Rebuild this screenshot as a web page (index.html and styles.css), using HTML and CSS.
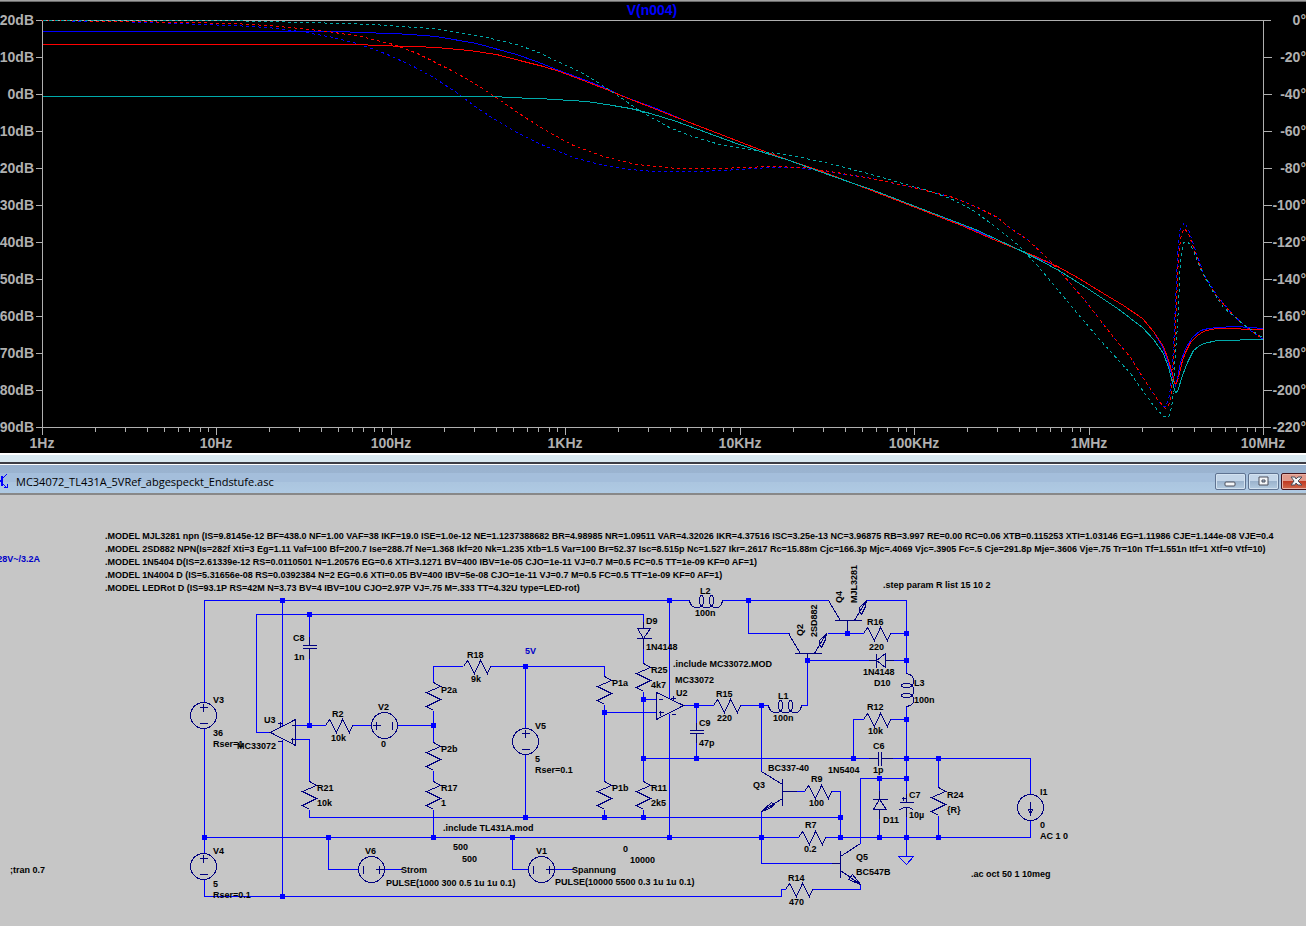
FILE: index.html
```html
<!DOCTYPE html>
<html lang="de">
<head>
  <meta charset="UTF-8">
  <meta name="viewport" content="width=device-width, initial-scale=1">
  <title>MC34072_TL431A_5VRef_abgespeckt_Endstufe.asc</title>
  <link rel="stylesheet" href="styles.css">
</head>
<body>
  <main class="workspace">

    <!-- Bode plot -->
    <section class="plot-pane">
      <svg class="plot" viewBox="0 2 1306 451" role="img" aria-label="V(n004)">
        <defs>
          <path id="decade" d="M53 0v4M83 0v4M105 0v4M122 0v4M136 0v4M147 0v4M158 0v4M166 0v4"/>
        </defs>

        <g class="axis" transform="translate(.5 .5)">
          <path d="M42 20H1270M42 20V434M1263 20V434M35 427H1270"/>
          <path d="M35 20h7M35 57h7M35 94h7M35 131h7M35 168h7M35 205h7M35 242h7M35 279h7M35 316h7M35 353h7M35 390h7"/>
          <path d="M1263 57h8M1263 94h8M1263 131h8M1263 168h8M1263 205h8M1263 242h8M1263 279h8M1263 316h8M1263 353h8M1263 390h8"/>
          <path d="M216 427v7M391 427v7M565 427v7M740 427v7M914 427v7M1089 427v7"/>
          <use href="#decade" x="42" y="427"/>
          <use href="#decade" x="216" y="427"/>
          <use href="#decade" x="391" y="427"/>
          <use href="#decade" x="565" y="427"/>
          <use href="#decade" x="740" y="427"/>
          <use href="#decade" x="914" y="427"/>
          <use href="#decade" x="1089" y="427"/>
        </g>

        <!-- R = 15 -->
        <g class="trace trace-blue" transform="translate(.5 .5)">
          <polyline points="42,31 340,31 359,32 392,33 410,34 436,36 476,43 516,54 536,61 556,69 586,80 606,88 623,96 656,108 689,122 723,135 759,149 789,160 819,170 853,183 871,189 920,208 973,229 993,239 1020,250 1033,256 1057,266 1077,277 1103,293 1123,305 1142,318 1153,331 1162,346 1167,360 1171,373 1175,385 1177,378 1180,362 1185,348 1192,337 1200,330 1208,328 1217,327 1235,326 1263,328"/>
          <polyline class="phase" points="42,20 100,21 157,22 200,24 233,25 267,27 300,31 333,37 360,44 387,54 413,66 433,77 456,92 476,107 496,120 516,132 543,145 573,157 603,165 629,169 653,171 696,171 723,170 769,167 796,167 819,170 853,175 871,178 913,187 953,197 977,207 997,217 1010,228 1027,239 1047,258 1063,275 1087,303 1110,333 1130,357 1143,378 1157,399 1164,407 1168,400 1170,388 1173,348 1175,302 1177,255 1179,230 1184,222 1188,229 1194,247 1203,273 1217,296 1233,315 1250,330 1263,339"/>
        </g>
        <!-- R = 10 -->
        <g class="trace trace-red" transform="translate(.5 .5)">
          <polyline points="42,44 365,44 370,45 414,46 436,47 469,50 496,54 519,60 543,66 559,71 583,80 606,89 623,96 656,109 689,122 723,135 759,149 789,160 819,170 853,183 871,190 920,209 961,225 993,239 1020,250 1033,255 1057,266 1077,277 1103,293 1123,305 1142,318 1153,331 1163,346 1168,360 1172,373 1174,383 1176,383 1178,377 1182,360 1185,352 1190,342 1197,335 1203,331 1210,329 1217,328 1263,329"/>
          <polyline class="phase" points="42,20 130,21 183,22 233,23 267,25 300,28 327,31 360,36 393,44 417,53 433,61 453,71 476,84 503,102 523,116 549,132 573,145 603,156 636,164 676,168 719,168 769,166 803,167 836,172 871,178 913,187 953,197 977,207 997,217 1010,228 1027,239 1047,258 1063,275 1087,303 1110,333 1130,357 1143,378 1157,399 1165,408 1169,403 1171,390 1174,348 1176,302 1178,255 1181,233 1184,228 1188,233 1193,247 1203,275 1217,297 1233,315 1250,330 1263,339"/>
        </g>
        <!-- R = 2 -->
        <g class="trace trace-teal" transform="translate(.5 .5)">
          <polyline points="42,96 500,96 503,97 539,98 570,100 586,101 606,104 630,108 650,113 676,121 706,132 736,143 760,151 789,160 819,171 853,183 871,189 920,208 975,229 990,236 1020,250 1040,260 1060,271 1087,288 1117,308 1142,327 1153,339 1163,353 1168,367 1172,382 1175,392 1177,391 1182,375 1187,362 1193,350 1198,346 1203,343 1217,340 1263,339"/>
          <polyline class="phase" points="42,20 221,20 306,22 342,23 373,24 400,26 433,28 453,31 486,37 516,44 536,51 559,62 579,71 599,83 623,99 636,108 649,116 669,127 689,135 719,144 753,150 769,152 796,156 829,163 871,174 927,190 950,198 973,210 997,228 1017,244 1037,265 1057,289 1077,313 1100,340 1130,373 1153,405 1163,416 1168,417 1171,407 1173,392 1174,365 1177,325 1179,282 1180,258 1183,242 1187,241 1192,248 1200,268 1213,292 1223,307 1243,324 1263,338"/>
        </g>

        <text class="plot-title" x="652" y="15">V(n004)</text>
        <g class="scale scale-end">
          <text x="34" y="25">20dB</text>
          <text x="34" y="62">10dB</text>
          <text x="34" y="99">0dB</text>
          <text x="34" y="136">10dB</text>
          <text x="34" y="173">20dB</text>
          <text x="34" y="210">30dB</text>
          <text x="34" y="247">40dB</text>
          <text x="34" y="284">50dB</text>
          <text x="34" y="321">60dB</text>
          <text x="34" y="358">70dB</text>
          <text x="34" y="395">80dB</text>
          <text x="34" y="432">90dB</text>
          <text x="1306" y="25">0°</text>
          <text x="1306" y="62">-20°</text>
          <text x="1306" y="99">-40°</text>
          <text x="1306" y="136">-60°</text>
          <text x="1306" y="173">-80°</text>
          <text x="1306" y="210">-100°</text>
          <text x="1306" y="247">-120°</text>
          <text x="1306" y="284">-140°</text>
          <text x="1306" y="321">-160°</text>
          <text x="1306" y="358">-180°</text>
          <text x="1306" y="395">-200°</text>
          <text x="1306" y="432">-220°</text>
        </g>
        <g class="scale scale-middle">
          <text x="42" y="448">1Hz</text>
          <text x="216" y="448">10Hz</text>
          <text x="391" y="448">100Hz</text>
          <text x="565" y="448">1KHz</text>
          <text x="740" y="448">10KHz</text>
          <text x="914" y="448">100KHz</text>
          <text x="1089" y="448">1MHz</text>
          <text x="1263" y="448">10MHz</text>
        </g>
      </svg>
    </section>

    <!-- Schematic window -->
    <section class="window">
      <header class="titlebar">
        <svg class="titlebar-icon" viewBox="0 0 9 16" aria-hidden="true">
          <path d="M0 7h2v2H0ZM1 3h2v10H1Z"/>
          <path class="icon-line" d="M2 6L7 1M2 10L7 15M4 14H7V11"/>
        </svg>
        <h1 class="titlebar-text">MC34072_TL431A_5VRef_abgespeckt_Endstufe.asc</h1>
        <div class="titlebar-buttons">
          <button class="win-btn" type="button" aria-label="Minimieren">
            <svg viewBox="0 0 13 12" aria-hidden="true"><rect class="glyph" x="1" y="7" width="10" height="4" rx="1"/></svg>
          </button>
          <button class="win-btn" type="button" aria-label="Maximieren">
            <svg viewBox="0 0 13 12" aria-hidden="true"><path class="glyph" fill-rule="evenodd" d="M2 2H11V10H2ZM5 5V7H8V5Z"/></svg>
          </button>
          <button class="win-btn win-btn-close" type="button" aria-label="Schließen">
            <svg viewBox="0 0 13 12" aria-hidden="true"><path class="glyph" d="M1 2H5L6 4L8 2H12L8 6L12 10H8L6 8L5 10H1L4 6Z"/></svg>
          </button>
        </div>
      </header>

      <svg class="schematic" viewBox="0 495 1306 431" role="img" aria-label="Schaltplan">
        <defs>
          <path id="res-h" d="M0 0L4 -6L11 7L17 -6L24 7L27 0"/>
          <path id="res-v" d="M0 0L7 4L-7 10L7 17L-7 24L0 28"/>
          <path id="coil" d="M0 0Q1 7 7 7Q14 7 14 1Q14 -5 12 -5Q10 -5 10 1Q10 7 17 7Q24 7 24 1Q24 -5 22 -5Q20 -5 20 1Q20 7 27 7Q32 7 33 0"/>
          <path id="npn" d="M-13 0H14M-7 0L-19 -20M7 0L19 -20M19 -20L12 -13V-9L14 -6L18 -14Z"/>
          <g id="source-v">
            <circle r="13"/>
            <path d="M-4 -8H4M0 -12V-4M-4 8H4"/>
          </g>
          <rect id="dot" x="-2" y="-2" width="5" height="5"/>
        </defs>

        <g class="wire" transform="translate(.5 .5)">
          <path d="M204 702V600H689M722 600H828M866 600H906V673"/>
          <path d="M643 614V628M643 614H256V732H270M309 614V645M309 648V725M295 725H325M352 725H371M397 725H433"/>
          <path d="M282 600V725M282 739V896"/>
          <path d="M462 666H433V682M433 710V742M433 770V781M433 809V837M490 666H604V676M604 704V781M604 809V817"/>
          <path d="M525 666V728M525 754V817M295 739H309V781M309 809V817H840"/>
          <path d="M204 728V853M204 879V896H781V889H785M812 889H860V884"/>
          <path d="M204 837H798M825 837H1030V820M328 837V869H358M384 869H401M512 837V869H528M554 869H572"/>
          <path d="M643 638V663M643 691V781M643 809V817M643 699H656M604 712H656M669 600V698M669 713V837"/>
          <path d="M683 705H713M740 705H768M801 705H807V653M696 705V730M696 733V758M643 758H878M881 758H1030V794"/>
          <path d="M748 600V633H789M827 633H863M890 633H906M807 660H876M885 660H906M847 620V633"/>
          <path d="M906 706V802M906 807V856M863 719H853V758M890 719H906M761 705V771M761 811V863H840"/>
          <path d="M782 791H804M831 791H840V837M860 843V778H906M879 778V799M879 809V837M938 758V787M938 815V837"/>
          <path d="M898 856H913L906 864Z"/>
        </g>

        <g class="part" transform="translate(.5 .5)">
          <use href="#res-h" x="463" y="666"/>
          <use href="#res-h" x="325" y="725"/>
          <use href="#res-h" x="713" y="705"/>
          <use href="#res-h" x="863" y="633"/>
          <use href="#res-h" x="863" y="719"/>
          <use href="#res-h" x="804" y="791"/>
          <use href="#res-h" x="798" y="837"/>
          <use href="#res-h" x="785" y="889"/>
          <use href="#res-v" x="433" y="682"/>
          <use href="#res-v" x="433" y="742"/>
          <use href="#res-v" x="433" y="781"/>
          <use href="#res-v" x="309" y="781"/>
          <use href="#res-v" x="604" y="676"/>
          <use href="#res-v" x="604" y="781"/>
          <use href="#res-v" x="643" y="663"/>
          <use href="#res-v" x="643" y="781"/>
          <use href="#res-v" x="938" y="787"/>
          <use href="#coil" x="689" y="600"/>
          <use href="#coil" x="768" y="705"/>
          <use href="#coil" transform="matrix(0 1 1 0 906 673)"/>
          <use href="#source-v" x="203" y="715"/>
          <use href="#source-v" x="203" y="866"/>
          <use href="#source-v" x="525" y="741"/>
          <use href="#source-v" transform="translate(384 725) rotate(-90)"/>
          <use href="#source-v" transform="translate(371 869) rotate(90)"/>
          <use href="#source-v" transform="translate(541 869) rotate(90)"/>
          <use href="#npn" x="847" y="620"/>
          <use href="#npn" x="807" y="653"/>
          <!-- op amps -->
          <path d="M656 692V719L683 705ZM658 699H662M658 712H663M660 710V715M670 698H675M673 695V700M671 714H675"/>
          <path d="M295 719V745L270 732ZM291 725H295M290 739H295M292 737V742M277 723H282M280 721V726M277 741H282"/>
          <!-- capacitors -->
          <path d="M302 645H316M302 648H316M689 730H703M689 733H703M878 751V765M881 751V765"/>
          <path d="M309 636V645M309 648V658M696 722V730M696 733V742M868 758H878M881 758H892M906 793V802M906 807V816"/>
          <path d="M899 802H913M899 809Q906 805 913 809M901 798H905M903 796V800"/>
          <!-- diodes -->
          <path d="M637 628H650L643 638ZM636 638H651M876 660L885 653V667ZM876 653V667M879 799L886 809H873ZM872 799H887"/>
          <path d="M643 621V628M643 638V648M868 660H876M885 660H893M879 790V799M879 809V818"/>
          <!-- Q3, Q5 -->
          <path d="M782 778V805M782 784L761 771M782 798L761 811M761 811L771 802L774 804L769 808Z"/>
          <path d="M840 850V877M840 856L860 843M840 870L860 884M860 884L848 879L852 874Z"/>
          <path d="M782 791H796M831 863H840M847 620V633M807 653V660"/>
          <!-- I1 -->
          <circle cx="1030" cy="807" r="13"/>
          <path d="M1030 801V814M1028 809H1032L1030 814Z"/>
        </g>

        <g class="dots">
          <use href="#dot" x="282" y="600"/>
          <use href="#dot" x="669" y="600"/>
          <use href="#dot" x="748" y="600"/>
          <use href="#dot" x="309" y="614"/>
          <use href="#dot" x="906" y="633"/>
          <use href="#dot" x="847" y="633"/>
          <use href="#dot" x="807" y="660"/>
          <use href="#dot" x="906" y="660"/>
          <use href="#dot" x="525" y="666"/>
          <use href="#dot" x="643" y="699"/>
          <use href="#dot" x="604" y="712"/>
          <use href="#dot" x="696" y="705"/>
          <use href="#dot" x="761" y="705"/>
          <use href="#dot" x="906" y="719"/>
          <use href="#dot" x="309" y="725"/>
          <use href="#dot" x="433" y="725"/>
          <use href="#dot" x="643" y="758"/>
          <use href="#dot" x="696" y="758"/>
          <use href="#dot" x="853" y="758"/>
          <use href="#dot" x="906" y="758"/>
          <use href="#dot" x="938" y="758"/>
          <use href="#dot" x="879" y="778"/>
          <use href="#dot" x="906" y="778"/>
          <use href="#dot" x="525" y="817"/>
          <use href="#dot" x="604" y="817"/>
          <use href="#dot" x="643" y="817"/>
          <use href="#dot" x="840" y="817"/>
          <use href="#dot" x="204" y="837"/>
          <use href="#dot" x="328" y="837"/>
          <use href="#dot" x="433" y="837"/>
          <use href="#dot" x="512" y="837"/>
          <use href="#dot" x="669" y="837"/>
          <use href="#dot" x="761" y="837"/>
          <use href="#dot" x="840" y="837"/>
          <use href="#dot" x="879" y="837"/>
          <use href="#dot" x="906" y="837"/>
          <use href="#dot" x="938" y="837"/>
          <use href="#dot" x="282" y="896"/>
        </g>

        <!-- SPICE directives -->
        <g class="label">
          <text x="105" y="539">.MODEL MJL3281 npn (IS=9.8145e-12 BF=438.0 NF=1.00 VAF=38 IKF=19.0 ISE=1.0e-12 NE=1.1237388682 BR=4.98985 NR=1.09511 VAR=4.32026 IKR=4.37516 ISC=3.25e-13 NC=3.96875 RB=3.997 RE=0.00 RC=0.06 XTB=0.115253 XTI=1.03146 EG=1.11986 CJE=1.144e-08 VJE=0.4</text>
          <text x="105" y="552">.MODEL 2SD882 NPN(Is=282f Xti=3 Eg=1.11 Vaf=100 Bf=200.7 Ise=288.7f Ne=1.368 Ikf=20 Nk=1.235 Xtb=1.5 Var=100 Br=52.37 Isc=8.515p Nc=1.527 Ikr=.2617 Rc=15.88m Cjc=166.3p Mjc=.4069 Vjc=.3905 Fc=.5 Cje=291.8p Mje=.3606 Vje=.75 Tr=10n Tf=1.551n Itf=1 Xtf=0 Vtf=10)</text>
          <text x="105" y="565">.MODEL 1N5404 D(IS=2.61339e-12 RS=0.0110501 N=1.20576 EG=0.6 XTI=3.1271 BV=400 IBV=1e-05 CJO=1e-11 VJ=0.7 M=0.5 FC=0.5 TT=1e-09 KF=0 AF=1)</text>
          <text x="105" y="578">.MODEL 1N4004 D (IS=5.31656e-08 RS=0.0392384 N=2 EG=0.6 XTI=0.05 BV=400 IBV=5e-08 CJO=1e-11 VJ=0.7 M=0.5 FC=0.5 TT=1e-09 KF=0 AF=1)</text>
          <text x="105" y="591">.MODEL LEDRot D (IS=93.1P RS=42M N=3.73 BV=4 IBV=10U CJO=2.97P VJ=.75 M=.333 TT=4.32U type=LED-rot)</text>
          <text x="883" y="588">.step param R list 15 10 2</text>
          <text x="673" y="667">.include MC33072.MOD</text>
          <text x="443" y="831">.include TL431A.mod</text>
          <text x="971" y="877">.ac oct 50 1 10meg</text>
          <text x="10" y="873">;tran 0.7</text>
        </g>

        <g class="label label-net">
          <text class="cut" x="40" y="562">28V~/3.2A</text>
          <text x="525" y="654">5V</text>
        </g>

        <!-- part names and values -->
        <g class="label">
          <text x="213" y="703">V3</text><text x="213" y="736">36</text><text x="213" y="747">Rser=1</text>
          <text x="213" y="854">V4</text><text x="213" y="887">5</text><text x="213" y="898">Rser=0.1</text>
          <text x="264" y="723">U3</text><text x="237" y="749">MC33072</text>
          <text x="293" y="641">C8</text><text x="294" y="660">1n</text>
          <text x="332" y="717">R2</text><text x="331" y="741">10k</text>
          <text x="317" y="791">R21</text><text x="317" y="806">10k</text>
          <text x="378" y="710">V2</text><text x="381" y="747">0</text>
          <text x="467" y="658">R18</text><text x="471" y="682">9k</text>
          <text x="441" y="693">P2a</text><text x="441" y="752">P2b</text>
          <text x="441" y="791">R17</text><text x="441" y="806">1</text>
          <text x="535" y="729">V5</text><text x="535" y="762">5</text><text x="535" y="773">Rser=0.1</text>
          <text x="453" y="850">500</text><text x="462" y="862">500</text>
          <text x="365" y="854">V6</text><text x="401" y="873">Strom</text>
          <text x="386" y="886">PULSE(1000 300 0.5 1u 1u 0.1)</text>
          <text x="536" y="854">V1</text><text x="572" y="873">Spannung</text>
          <text x="555" y="885">PULSE(10000 5500 0.3 1u 1u 0.1)</text>
          <text x="623" y="852">0</text><text x="630" y="863">10000</text>
          <text x="612" y="686">P1a</text><text x="612" y="791">P1b</text>
          <text x="646" y="624">D9</text><text x="646" y="650">1N4148</text>
          <text x="651" y="673">R25</text><text x="651" y="688">4k7</text>
          <text x="651" y="791">R11</text><text x="651" y="806">2k5</text>
          <text x="675" y="683">MC33072</text><text x="676" y="696">U2</text>
          <text x="700" y="594">L2</text><text x="695" y="616">100n</text>
          <text x="716" y="697">R15</text><text x="717" y="721">220</text>
          <text x="699" y="726">C9</text><text x="699" y="746">47p</text>
          <text x="778" y="699">L1</text><text x="773" y="721">100n</text>
          <text transform="translate(842 603) rotate(-90)">Q4</text>
          <text transform="translate(857 603) rotate(-90)">MJL3281</text>
          <text transform="translate(803 636) rotate(-90)">Q2</text>
          <text transform="translate(817 637) rotate(-90)">2SD882</text>
          <text x="867" y="625">R16</text><text x="869" y="650">220</text>
          <text x="863" y="675">1N4148</text><text x="874" y="686">D10</text>
          <text x="914" y="686">L3</text><text x="914" y="703">100n</text>
          <text x="867" y="710">R12</text><text x="868" y="734">10k</text>
          <text x="873" y="749">C6</text><text x="873" y="773">1p</text>
          <text x="768" y="771">BC337-40</text><text x="753" y="788">Q3</text>
          <text x="828" y="773">1N5404</text><text x="883" y="823">D11</text>
          <text x="811" y="782">R9</text><text x="809" y="806">100</text>
          <text x="805" y="828">R7</text><text x="804" y="852">0.2</text>
          <text x="788" y="881">R14</text><text x="789" y="905">470</text>
          <text x="909" y="798">C7</text><text x="909" y="818">10µ</text>
          <text x="947" y="798">R24</text><text x="947" y="813">{R}</text>
          <text x="856" y="860">Q5</text><text x="856" y="875">BC547B</text>
          <text x="1040" y="795">I1</text><text x="1040" y="828">0</text><text x="1040" y="839">AC 1 0</text>
        </g>
      </svg>
    </section>
  </main>
</body>
</html>
```
FILE: styles.css
```css
* {
  box-sizing: border-box;
}

body {
  margin: 0;
  background: #c6c6c6;
  font-family: "Liberation Sans", Arial, sans-serif;
}

.workspace {
  overflow: hidden;
}

svg {
  display: block;
}

/* ---------- Plot ---------- */
.plot-pane {
  background: #000;
  border-top: 1px solid #a0a0a0;
  box-shadow: inset 0 1px #696969;
  padding-top: 1px;
}

.plot {
  width: 100%;
  height: auto;
}

.axis path,
.axis use {
  fill: none;
  stroke: #b0b0b0;
  shape-rendering: crispEdges;
}

.trace {
  fill: none;
  shape-rendering: crispEdges;
}

.trace-blue { stroke: #0000ff; }
.trace-red { stroke: #ff0000; }
.trace-teal { stroke: #00aaaa; }

.phase {
  stroke-dasharray: 3 3;
}

.plot-title {
  fill: #0000ff;
  font-size: 14px;
  font-weight: bold;
  text-anchor: middle;
}

.scale {
  fill: #b0b0b0;
  font-size: 14px;
  font-weight: bold;
}

.scale-end { text-anchor: end; }
.scale-middle { text-anchor: middle; }

/* ---------- Window frame ---------- */
.window {
  border-top: 2px solid #fff;
}

.window::before {
  content: "";
  display: block;
  height: 7px;
  background: #d8e8f0;
  border-bottom: 2px solid #3c3c44;
}

.titlebar {
  display: flex;
  align-items: center;
  height: 31px;
  padding-top: 4px;
  border-top: 1px solid #fff;
  border-bottom: 2px solid #888;
  background: linear-gradient(#98b1ce 0, #9bb4d0 8px, #a4bedb 8px, #a4bedb 17px, #abc5df 17px, #afcae3 100%);
}

.titlebar-icon {
  width: 9px;
  height: 16px;
  fill: #0000ff;
  shape-rendering: crispEdges;
}

.icon-line {
  fill: none;
  stroke: #0000ff;
}

.titlebar-text {
  flex: 1;
  margin: 0 0 0 7px;
  font: 11px "Open Sans", "Noto Sans", sans-serif;
  white-space: nowrap;
  color: #000;
}

.titlebar-buttons {
  display: flex;
  gap: 2px;
  margin-right: -6px;
}

.win-btn {
  display: flex;
  align-items: center;
  justify-content: center;
  width: 31px;
  height: 17px;
  padding: 0;
  border: 1px solid #5f7391;
  border-radius: 2px;
  background: linear-gradient(#c3d5e8 50%, #9bb3cd 50%, #b4cbe0);
  box-shadow: inset 0 0 0 1px #d3e2f0;
}

.win-btn svg {
  width: 13px;
  height: 12px;
}

.win-btn-close {
  border-color: #43121a;
  background: linear-gradient(#e09a8c 50%, #c03a22 50%, #d0694c);
  box-shadow: inset 0 0 0 1px #e8b0a4;
}

.glyph {
  fill: #f4f6f8;
  stroke: #4a4f5c;
}

/* ---------- Schematic ---------- */
.schematic {
  width: 100%;
  height: auto;
  background: #c6c6c6;
}

.wire,
.part {
  fill: none;
  shape-rendering: crispEdges;
}

.wire { stroke: #0000ff; }
.part { stroke: #00007f; }

.dots {
  fill: #0000ff;
  shape-rendering: crispEdges;
}

.label {
  font-size: 9px;
  font-weight: bold;
  fill: #000;
}

.label-net { fill: #0000c8; }

.cut { text-anchor: end; }
```
